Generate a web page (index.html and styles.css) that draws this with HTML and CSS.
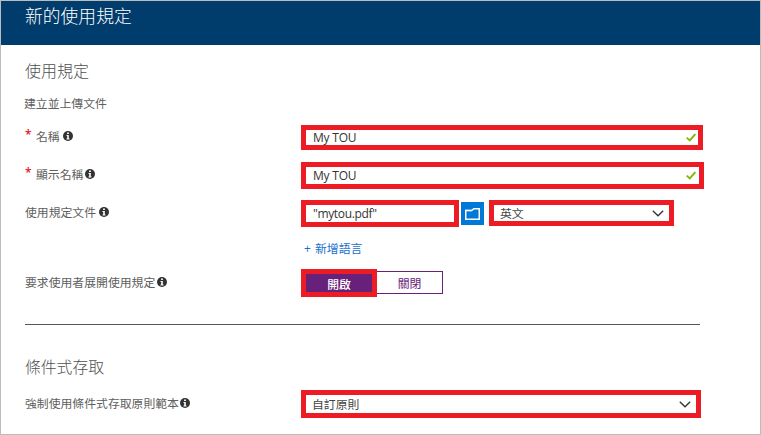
FILE: index.html
```html
<!DOCTYPE html>
<html lang="zh-Hant">
<head>
<meta charset="utf-8">
<title>新的使用規定</title>
<link rel="stylesheet" href="styles.css">
</head>
<body>
<svg class="defs" width="0" height="0" aria-hidden="true">
  <symbol id="info" viewBox="0 0 10 10"><circle cx="5" cy="5" r="5" fill="#333"/><path d="M4.1 1.6h1.8v1.5H4.1zM3.5 4h2.3v3.4h.7v1H3.5v-1h.7V5h-.7z" fill="#fff"/></symbol>
  <symbol id="check" viewBox="0 0 10 9"><path d="M.7 4.6 3.8 7.4 9.3 1" fill="none" stroke="#7fba00" stroke-width="1.9"/></symbol>
  <symbol id="chevron" viewBox="0 0 12 7"><path d="M.8.8 6 5.8 11.2.8" fill="none" stroke="#333" stroke-width="1.3"/></symbol>
</svg>
<main class="blade">
  <header class="title">新的使用規定</header>
  <form class="content">
    <h2>使用規定</h2>
    <p class="sub">建立並上傳文件</p>
    <div class="row name">
      <label><b>*</b>名稱<svg class="info"><use href="#info"/></svg></label>
      <div class="box"><span class="latin">My TOU</span><svg class="check"><use href="#check"/></svg></div>
    </div>
    <div class="row display">
      <label><b>*</b>顯示名稱<svg class="info tight"><use href="#info"/></svg></label>
      <div class="box"><span class="latin">My TOU</span><svg class="check"><use href="#check"/></svg></div>
    </div>
    <div class="row document">
      <label>使用規定文件<svg class="info"><use href="#info"/></svg></label>
      <div class="box file"><span class="latin">"mytou.pdf"</span></div>
      <div class="folder"><svg width="15" height="12" viewBox="0 0 15 12"><path d="M.75 11.25V2.5h6L8.8.75h5.45v10.5z" fill="none" stroke="#fff" stroke-width="1.5"/><path d="M0 1.8h6.4v1.4H0z" fill="#fff"/></svg></div>
      <div class="box language"><span>英文</span><svg class="chevron"><use href="#chevron"/></svg></div>
    </div>
    <div class="add"><span class="plus">+</span>新增語言</div>
    <div class="row expand">
      <label>要求使用者展開使用規定<svg class="info tight"><use href="#info"/></svg></label>
      <div class="on">開啟</div><div class="off">關閉</div>
    </div>
    <hr>
    <h2 class="access">條件式存取</h2>
    <div class="row policy">
      <label>強制使用條件式存取原則範本<svg class="info last"><use href="#info"/></svg></label>
      <div class="box"><span>自訂原則</span><svg class="chevron"><use href="#chevron"/></svg></div>
    </div>
  </form>
</main>
</body>
</html>
```
FILE: styles.css
```css
* { box-sizing: border-box; }
body {
  margin: 0;
  background: #fff;
  color: #606060;
  font-family: "Noto Sans CJK TC", sans-serif;
  font-weight: 400;
  font-size: 11.85px;
}
.defs { display: block; }
.blade { width: 761px; height: 435px; border: 1px solid #bcbcbc; overflow: hidden; }
.title {
  height: 44px;
  padding: 0 24px;
  background: #003c6c;
  color: #fff;
  font-size: 17.8px;
  font-weight: 300;
  line-height: 29px;
}
.content { padding-left: 24px; }
h2 { margin: 12px 0 0; color: #505050; font-size: 16px; font-weight: 300; line-height: 26px; height: 26px; }
.sub { margin: 10px 0 0 -1px; line-height: 20px; height: 20px; }
.row { display: flex; align-items: center; }
label { display: flex; align-items: center; width: 276px; flex: none; line-height: 20px; white-space: nowrap; margin-top: -3px; }
label b { width: 11px; color: #e81123; font: 600 12px/18px "Open Sans", sans-serif; height: 21px; }
.info { width: 10px; height: 10px; margin-left: 3px; }
.info.tight { margin-left: 2px; }
.info.last { margin-left: 1px; }
.box {
  display: flex;
  align-items: center;
  justify-content: space-between;
  border: 5px solid #ed1c24;
  padding-left: 7px;
  height: 27px;
  line-height: 16px;
  color: #444;
}
.latin { color: #333; font: 12px/16px "Open Sans", sans-serif; letter-spacing: -0.2px; }
.file .latin { letter-spacing: -0.35px; }
.check { width: 10px; height: 9px; }
.chevron { width: 12px; height: 7px; margin-right: 5px; }
.name { margin-top: 12px; height: 25px; }
.name .box { width: 402px; height: 25px; padding-right: 2px; }
.display { margin-top: 12px; height: 27px; }
.display .box { width: 403px; padding-right: 3px; }
.document { margin-top: 11px; height: 27px; }
.document .file { width: 158px; }
.folder { display: flex; align-items: center; justify-content: center; width: 23px; height: 23px; margin: 0 5px 0 2px; background: #0078d7; }
.document .language { width: 185px; height: 26px; align-self: flex-start; padding-left: 6px; }
.add { margin: 11px 0 0 279px; height: 20px; line-height: 20px; color: #1670cc; }
.plus { display: inline-block; width: 11px; font-family: "Open Sans", sans-serif; }
.expand { margin-top: 11px; height: 28px; }
.on, .off { display: flex; align-items: center; justify-content: center; }
.on { width: 76px; height: 28px; border: 5px solid #ed1c24; background: #68217a; color: #fff; font-weight: 500; }
.off { width: 66px; height: 23px; margin-bottom: 1px; border: 1px solid #68217a; border-left: 0; color: #68217a; }
hr { width: 675px; height: 1px; margin: 27px 0 0; border: 0; background: #555; }
.access { margin: 29px 0 0; font-size: 15.8px; }
.policy { margin-top: 10px; height: 28px; }
.policy .box { width: 400px; height: 28px; padding-left: 6px; }
```
